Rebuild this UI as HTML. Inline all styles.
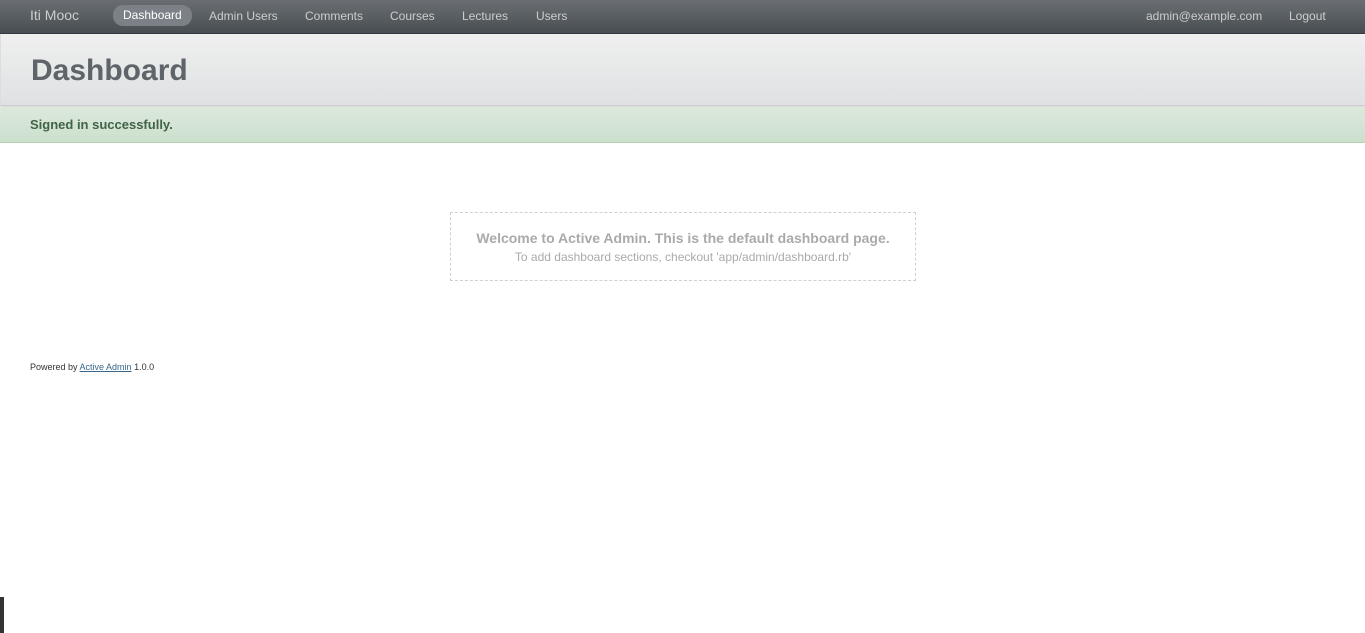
<!DOCTYPE html>
<html><head><style>
body{margin:0;font-family:"Liberation Sans",sans-serif;background:#fff;width:1365px;height:633px;overflow:hidden;position:relative}
#hdr{height:33px;background:linear-gradient(#6a6e73,#484e53);border-bottom:1px solid #34393c;position:relative}
#hdr span{position:absolute;top:1px;line-height:31px;font-size:12px;color:#cdcdcd}
#hdr .brand{left:30px;font-size:14px;color:#cdcdcd;top:0}
#hdr .cur{left:113px;top:5px;line-height:21px;height:21px;padding:0 10px;border-radius:10px;background:#7b8186;color:#fff}
#title{height:71px;background:linear-gradient(#efefef,#dfe1e2);border-bottom:1px solid #cdcdcd;border-left:1px solid #ddd;box-shadow:0 1px 2px #ccc}
#title h2{margin:0;padding:20px 0 0 30px;font-size:30px;font-weight:bold;color:#5e6469}
#flash{margin-top:1px;height:35px;background:linear-gradient(#dce9dd,#ccdfcd);border-bottom:1px solid #b3d1b4;color:#416347;font-weight:bold;font-size:13px;line-height:35px;padding-left:30px}
#box{position:absolute;left:450px;top:212px;width:464px;height:67px;border:1px dashed #d0d0d0;text-align:center;color:#aaa}
#box b{display:block;font-size:14px;margin-top:17px}
#box small{display:block;font-size:12px;margin-top:4px}
#foot{position:absolute;left:30px;top:362px;font-size:9px;color:#333}
#foot a{color:#38678b}
</style></head><body>
<div id="hdr">
<span class="brand">Iti Mooc</span>
<span class="cur">Dashboard</span>
<span style="left:209px">Admin Users</span>
<span style="left:305px">Comments</span>
<span style="left:390px">Courses</span>
<span style="left:462px">Lectures</span>
<span style="left:536px">Users</span>
<span style="left:1146px">admin@example.com</span>
<span style="left:1289px">Logout</span>
</div>
<div id="title"><h2>Dashboard</h2></div>
<div id="flash">Signed in successfully.</div>
<div id="box"><b>Welcome to Active Admin. This is the default dashboard page.</b><small>To add dashboard sections, checkout 'app/admin/dashboard.rb'</small></div>
<div id="foot">Powered by <a href="#">Active Admin</a> 1.0.0</div>
<div style="position:absolute;left:0;top:597px;width:4px;height:36px;background:#333"></div>
</body></html>
